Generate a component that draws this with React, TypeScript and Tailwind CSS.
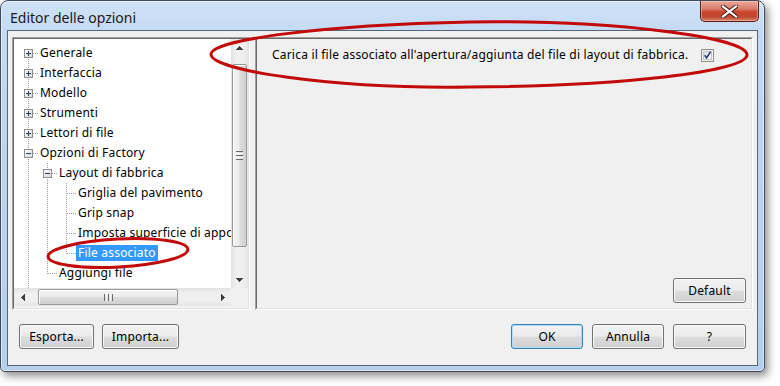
import React from "react";

type CellKind = "F" | "T" | "L" | "I" | "";
interface RowDef {
  cells: CellKind[];
  box?: "+" | "-";
  label: string;
  selected?: boolean;
}

const rows: RowDef[] = [
  { cells: ["F"], box: "+", label: "Generale" },
  { cells: ["T"], box: "+", label: "Interfaccia" },
  { cells: ["T"], box: "+", label: "Modello" },
  { cells: ["T"], box: "+", label: "Strumenti" },
  { cells: ["T"], box: "+", label: "Lettori di file" },
  { cells: ["T"], box: "-", label: "Opzioni di Factory" },
  { cells: ["I", "T"], box: "-", label: "Layout di fabbrica" },
  { cells: ["I", "I", "T"], label: "Griglia del pavimento" },
  { cells: ["I", "I", "T"], label: "Grip snap" },
  { cells: ["I", "I", "T"], label: "Imposta superficie di appoggio" },
  { cells: ["I", "I", "L"], label: "File associato", selected: true },
  { cells: ["I", "L"], label: "Aggiungi file" },
  { cells: ["I"], label: "" },
];

const DOT = "#a0a0a0";

function TreeCell({ kind, box }: { kind: CellKind; box?: "+" | "-" }) {
  return (
    <svg width={19} height={20} className="block shrink-0" shapeRendering="crispEdges">
      {(kind === "I" || kind === "T") && (
        <line x1={9.5} y1={0} x2={9.5} y2={20} stroke={DOT} strokeDasharray="1 1" />
      )}
      {kind === "L" && <line x1={9.5} y1={0} x2={9.5} y2={11} stroke={DOT} strokeDasharray="1 1" />}
      {kind === "F" && <line x1={9.5} y1={10} x2={9.5} y2={20} stroke={DOT} strokeDasharray="1 1" />}
      {(kind === "T" || kind === "L" || kind === "F") && (
        <line x1={10} y1={10.5} x2={19} y2={10.5} stroke={DOT} strokeDasharray="1 1" />
      )}
      {box && (
        <g>
          <rect x={5.5} y={6.5} width={8} height={8} fill="url(#treebox)" stroke="#8f8f8f" />
          <line x1={7} y1={10.5} x2={12} y2={10.5} stroke="#2b3a63" />
          {box === "+" && <line x1={9.5} y1={8} x2={9.5} y2={13} stroke="#2b3a63" />}
        </g>
      )}
    </svg>
  );
}

function TreeRow({ row }: { row: RowDef }) {
  return (
    <div className="flex h-[20px] items-center whitespace-nowrap">
      {row.cells.map((c, i) => (
        <TreeCell key={i} kind={c} box={i === row.cells.length - 1 ? row.box : undefined} />
      ))}
      {row.label && (
        <span
          className={
            row.selected
              ? "px-[2px] h-[16px] leading-[16px] bg-[#3399ff] text-white"
              : "px-[2px] h-[16px] leading-[16px] text-black"
          }
        >
          {row.label}
        </span>
      )}
    </div>
  );
}

function ArrowUp() {
  return (
    <svg width={7} height={4} className="block" shapeRendering="crispEdges">
      <path d="M3 0 H4 V1 H5 V2 H6 V3 H7 V4 H0 V3 H1 V2 H2 V1 H3 Z" fill="#3f3f3f" />
    </svg>
  );
}
function ArrowDown() {
  return (
    <svg width={7} height={4} className="block" shapeRendering="crispEdges">
      <path d="M0 0 H7 V1 H6 V2 H5 V3 H4 V4 H3 V3 H2 V2 H1 V1 H0 Z" fill="#3f3f3f" />
    </svg>
  );
}
function ArrowLeft() {
  return (
    <svg width={4} height={7} className="block" shapeRendering="crispEdges">
      <path d="M3 0 H4 V7 H3 V6 H2 V5 H1 V4 H0 V3 H1 V2 H2 V1 H3 Z" fill="#3f3f3f" />
    </svg>
  );
}
function ArrowRight() {
  return (
    <svg width={4} height={7} className="block" shapeRendering="crispEdges">
      <path d="M0 0 H1 V1 H2 V2 H3 V3 H4 V4 H3 V5 H2 V6 H1 V7 H0 Z" fill="#3f3f3f" />
    </svg>
  );
}

function VScroll() {
  return (
    <div className="w-[17px] flex flex-col bg-[linear-gradient(90deg,#e2e2e2_0%,#f0f0f0_30%,#efefef_70%,#e6e6e6_100%)]">
      <div className="h-[17px] flex items-center justify-center">
        <ArrowUp />
      </div>
      <div className="flex-1 pt-[8px] px-[1px] flex flex-col">
        <div className="h-[183px] rounded-[2px] border border-[#989898] bg-[linear-gradient(90deg,#f4f4f4_0%,#ececec_45%,#dcdcdc_55%,#d0d0d0_100%)] shadow-[inset_1px_1px_0_#ffffff] flex flex-col items-center justify-center gap-[1px]">
          <div className="w-[7px] h-[1px] bg-[#6a6a6a]" />
          <div className="w-[7px] h-[1px] bg-[#fafafa]" />
          <div className="w-[7px] h-[1px] bg-[#6a6a6a]" />
          <div className="w-[7px] h-[1px] bg-[#fafafa]" />
          <div className="w-[7px] h-[1px] bg-[#6a6a6a]" />
        </div>
      </div>
      <div className="h-[17px] flex items-center justify-center">
        <ArrowDown />
      </div>
    </div>
  );
}

function HScroll() {
  return (
    <div className="h-[20px] flex bg-[#f0f0f0] pb-[2px]">
      <div className="flex-1 flex bg-[linear-gradient(180deg,#e2e2e2_0%,#f0f0f0_30%,#efefef_70%,#e6e6e6_100%)]">
        <div className="w-[17px] flex items-center justify-center">
          <ArrowLeft />
        </div>
        <div className="flex-1 pl-[7px] py-[1px] flex">
          <div className="w-[140px] rounded-[2px] border border-[#989898] bg-[linear-gradient(180deg,#f4f4f4_0%,#ececec_45%,#dcdcdc_55%,#d0d0d0_100%)] shadow-[inset_1px_1px_0_#ffffff] flex items-center justify-center gap-[1px]">
            <div className="h-[7px] w-[1px] bg-[#6a6a6a]" />
            <div className="h-[7px] w-[1px] bg-[#fafafa]" />
            <div className="h-[7px] w-[1px] bg-[#6a6a6a]" />
            <div className="h-[7px] w-[1px] bg-[#fafafa]" />
            <div className="h-[7px] w-[1px] bg-[#6a6a6a]" />
          </div>
        </div>
        <div className="w-[17px] flex items-center justify-center">
          <ArrowRight />
        </div>
      </div>
      <div className="w-[17px] bg-[#f0f0f0]" />
    </div>
  );
}

function WinButton({ children, className, primary }: { children: React.ReactNode; className: string; primary?: boolean }) {
  const base =
    "h-[25px] rounded-[3px] border flex items-center justify-center text-[12px] leading-[15px] text-black bg-[linear-gradient(180deg,#f2f2f2_0%,#ebebeb_48%,#dddddd_52%,#cfcfcf_100%)]";
  const tone = primary
    ? " border-[#3c7fb1] shadow-[inset_0_0_0_1px_#a8e0fb]"
    : " border-[#707070] shadow-[inset_0_0_0_1px_#fbfbfb]";
  return <div className={base + tone + " " + className}>{children}</div>;
}

function Checkbox() {
  return (
    <svg width={13} height={13} className="block shrink-0" shapeRendering="crispEdges">
      <defs>
        <linearGradient id="cbg" x1="0" y1="0" x2="1" y2="1">
          <stop offset="0" stopColor="#dcdcdc" />
          <stop offset="1" stopColor="#ffffff" />
        </linearGradient>
      </defs>
      <rect x={0.5} y={0.5} width={12} height={12} fill="#f4f4f4" stroke="#8e8f8f" />
      <rect x={2.5} y={2.5} width={8} height={8} fill="url(#cbg)" stroke="#c4c4c4" />
      <path d="M3.6 6.2 L5.6 8.8 L9.6 2.8" fill="none" stroke="#34447c" strokeWidth={1.7} shapeRendering="geometricPrecision" />
    </svg>
  );
}

function CloseButton() {
  return (
    <div className="w-[59px] h-[21px] rounded-b-[5px] border border-t-0 border-[#5a1a12] bg-[linear-gradient(180deg,#e9a99c_0%,#d97a68_40%,#c7432d_55%,#c04a32_80%,#d8826a_100%)] shadow-[inset_0_0_0_1px_rgba(255,220,210,0.45)] flex items-center justify-center">
      <svg width={17} height={13} className="block">
        <path d="M2 1.5 L15 11.5 M15 1.5 L2 11.5" stroke="#4a2018" strokeWidth={4.2} strokeLinecap="square" fill="none" />
        <path d="M2 1.5 L15 11.5 M15 1.5 L2 11.5" stroke="#ffffff" strokeWidth={2.2} strokeLinecap="square" fill="none" />
      </svg>
    </div>
  );
}

export default function App() {
  return (
    <div className="relative w-[780px] h-[386px] bg-white overflow-hidden font-['Noto_Sans','Open_Sans',sans-serif] text-[12px] tracking-[0.2px] text-black">
      <svg width={0} height={0} className="absolute">
        <defs>
          <linearGradient id="treebox" x1="0" y1="0" x2="1" y2="1">
            <stop offset="0" stopColor="#ffffff" />
            <stop offset="1" stopColor="#d6d6d6" />
          </linearGradient>
        </defs>
      </svg>

      <div className="w-[765px] h-[372px] flex flex-col rounded-t-[8px] rounded-b-[5px] border border-[#3e4b5e] bg-[linear-gradient(180deg,#cfe2f6_0%,#c2d9f2_10%,#bad2ed_60%,#b6cfea_100%)] shadow-[inset_0_0_0_1px_rgba(255,255,255,0.5),3px_4px_8px_rgba(0,0,0,0.45)]">
        {/* Title bar */}
        <div className="h-[29px] flex items-start justify-between pl-[9px] pr-[5px]">
          <span className="pt-[7px] text-[14px] leading-[20px] tracking-normal text-[#1a1a1a]">Editor delle opzioni</span>
          <CloseButton />
        </div>

        {/* Client area */}
        <div className="mx-[6px] h-[336px] border border-[#56667c] bg-[#f0f0f0] flex flex-col px-[4px] pt-[6px]">
          <div className="h-[273px] flex gap-[5px]">
            {/* Tree panel */}
            <div className="w-[238px] border border-t-[#a0a0a0] border-l-[#a0a0a0] border-b-white border-r-white">
              <div className="h-full flex flex-col border border-t-[#696969] border-l-[#696969] border-b-[#e3e3e3] border-r-[#e3e3e3]">
                <div className="flex-1 flex min-h-0">
                  <div className="flex-1 bg-white overflow-hidden pl-[5px] pt-[4px]">
                    {rows.map((r, i) => (
                      <TreeRow key={i} row={r} />
                    ))}
                  </div>
                  <VScroll />
                </div>
                <HScroll />
              </div>
            </div>

            {/* Right panel */}
            <div className="flex-1 border border-t-[#a0a0a0] border-l-[#a0a0a0] border-b-white border-r-white">
              <div className="h-full flex flex-col border border-t-[#696969] border-l-[#696969] border-b-[#e3e3e3] border-r-[#e3e3e3]">
                <div className="flex items-center pl-[15px] pt-[8px]">
                  <span className="leading-[16px] whitespace-nowrap">
                    Carica il file associato all'apertura/aggiunta del file di layout di fabbrica.
                  </span>
                  <div className="ml-[13px]">
                    <Checkbox />
                  </div>
                </div>
                <div className="mt-auto self-end mr-[5px] mb-[5px]">
                  <WinButton className="w-[73px]">Default</WinButton>
                </div>
              </div>
            </div>
          </div>

          {/* Bottom buttons */}
          <div className="mt-[14px] flex items-center px-[7px]">
            <WinButton className="w-[75px]">Esporta...</WinButton>
            <WinButton className="w-[77px] ml-[8px]">Importa...</WinButton>
            <div className="flex-1" />
            <WinButton className="w-[72px]" primary>
              OK
            </WinButton>
            <WinButton className="w-[72px] ml-[9px]">Annulla</WinButton>
            <WinButton className="w-[73px] ml-[9px]">?</WinButton>
          </div>
        </div>
      </div>

      {/* Red annotation ellipses drawn over the screenshot */}
      <svg width={780} height={386} className="absolute left-0 top-0 pointer-events-none">
        <path
          d="M211,54 C212,40 320,25 470,22 C612,20 748,37 747,55 C746,72 620,86 470,87 C330,89 210,70 211,54 Z"
          fill="none"
          stroke="#c20a0a"
          strokeWidth={3}
        />
        <ellipse cx={118} cy={253} rx={70} ry={14} transform="rotate(-3 118 253)" fill="none" stroke="#c20a0a" strokeWidth={3} />
      </svg>
    </div>
  );
}
